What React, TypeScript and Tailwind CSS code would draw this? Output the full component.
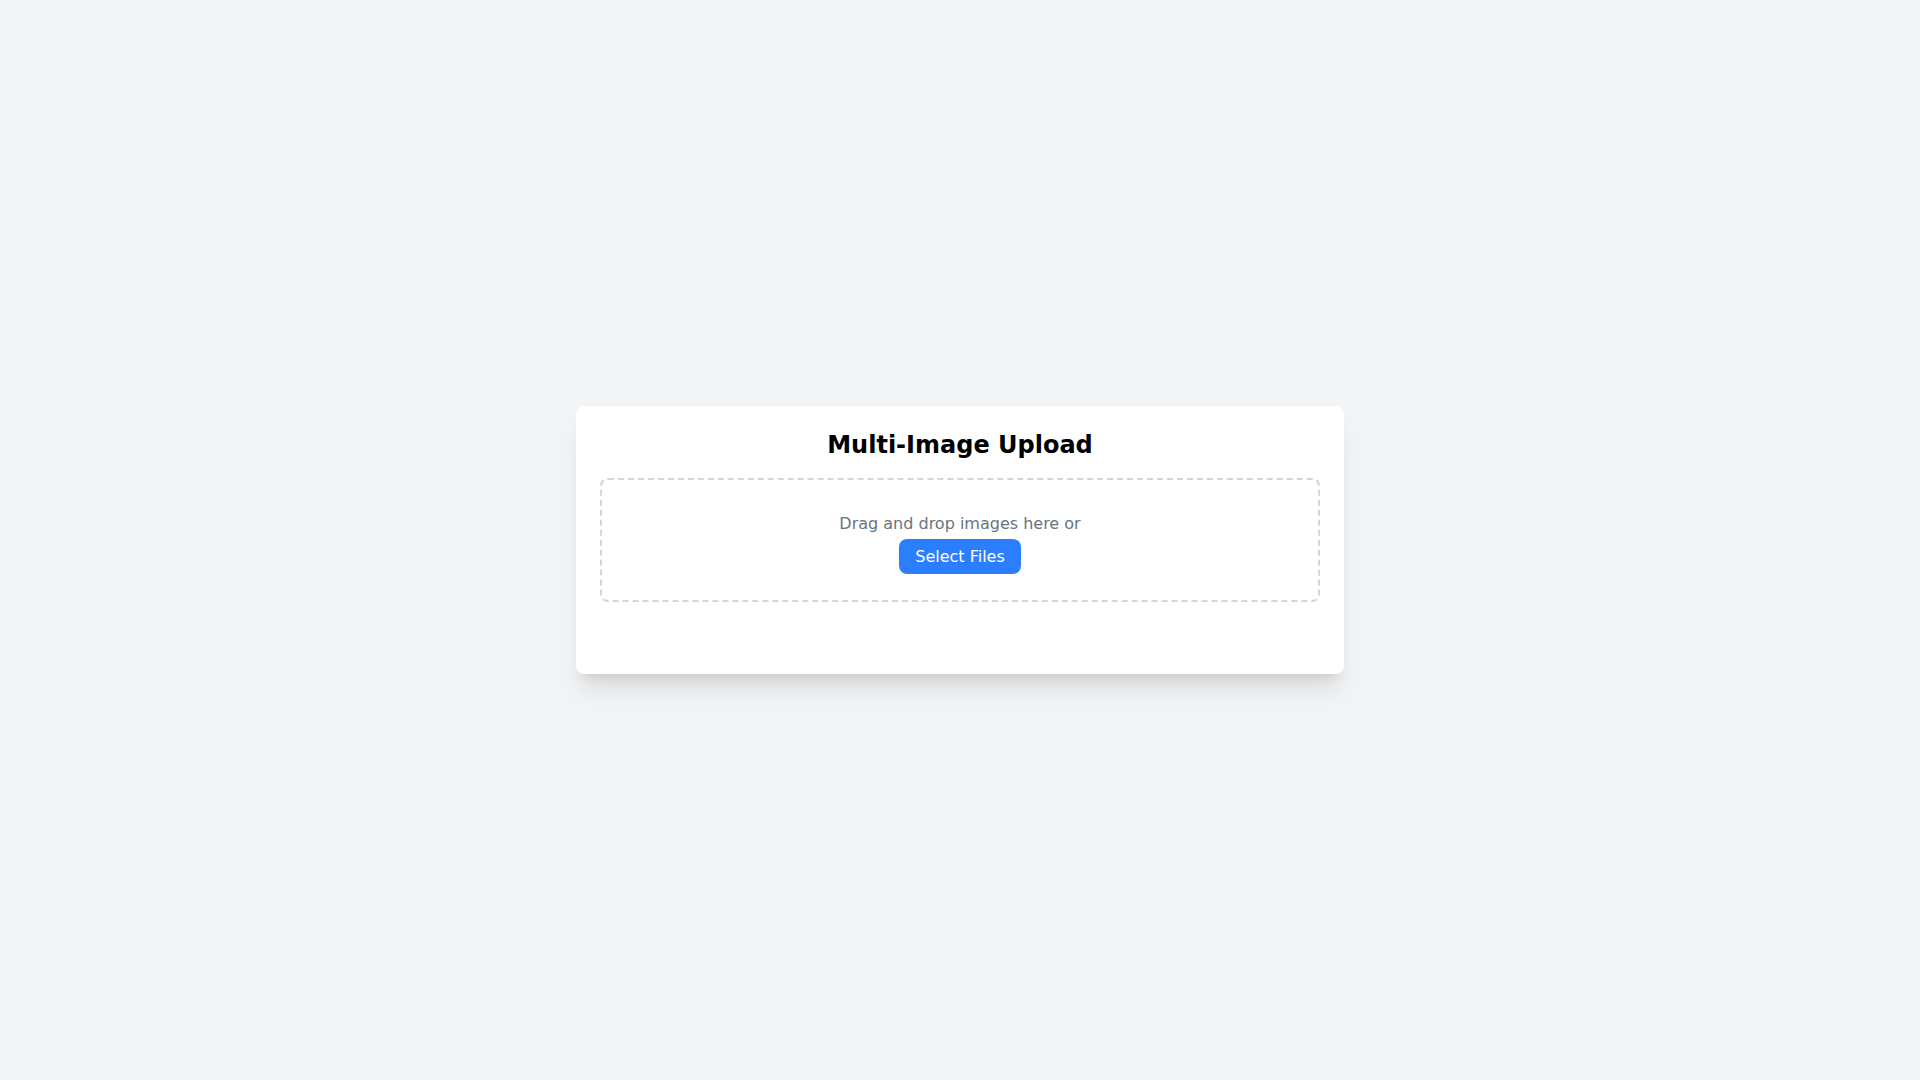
import React, { useRef } from 'react';

function App() {
    const inputRef = useRef<HTMLInputElement>(null);

    return (
        <div className="min-h-screen bg-gray-100 flex items-center justify-center font-['DejaVu_Sans',sans-serif]">
            <div className="w-[768px] bg-white rounded-lg shadow-xl p-6">
                <h1 className="text-2xl leading-[31px] font-bold text-black text-center mb-[17px]">Multi-Image Upload</h1>

                {/* Drop zone */}
                <div className="border-2 border-dashed border-gray-300 rounded-lg pt-8 pb-[26px] flex flex-col items-center">
                    <p className="text-base leading-6 text-gray-500">Drag and drop images here or</p>
                    <button
                        onClick={() => inputRef.current?.click()}
                        className="mt-[3px] bg-blue-500 text-white text-base leading-6 px-4 py-[5.5px] rounded-lg"
                    >
                        Select Files
                    </button>
                    <input ref={inputRef} type="file" multiple accept="image/*" className="hidden" />
                </div>

                {/* Preview grid (empty) */}
                <div className="h-[48px]"></div>
            </div>
        </div>
    );
}

export default App;
